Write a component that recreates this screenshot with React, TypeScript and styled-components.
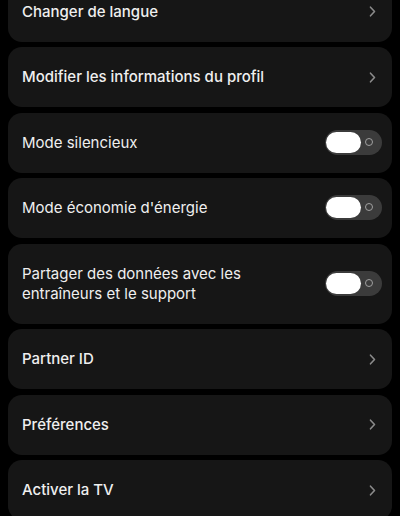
import styled, { createGlobalStyle } from "styled-components";

const GlobalStyle = createGlobalStyle`
  html, body {
    margin: 0;
    padding: 0;
    background: #000;
  }
  body {
    font-family: Inter, "Noto Sans", sans-serif;
    -webkit-font-smoothing: antialiased;
  }
`;

const Screen = styled.div`
  width: 400px;
  height: 516px;
  overflow: hidden;
  background: #000;
`;

// list is scrolled a bit, first card is cut by the top edge
const List = styled.div`
  display: flex;
  flex-direction: column;
  gap: 5.5px;
  padding: 0 8px;
  margin-top: -18.5px;
`;

const Card = styled.div`
  display: flex;
  align-items: center;
  justify-content: space-between;
  min-height: 60px;
  box-sizing: border-box;
  padding: 20px 16px 20px 14px;
  background: #161616;
  border-radius: 14px;
`;

const Label = styled.span<{ $strong?: boolean }>`
  color: #efefef;
  font-size: 15px;
  line-height: 20px;
  font-weight: ${(p) => (p.$strong ? 500 : 400)};
  max-width: 270px;
`;

const Track = styled.div`
  position: relative;
  width: 57px;
  height: 25px;
  border-radius: 13px;
  background: #3b3b3b;
  margin: -3px -6px -2px 0;
  flex-shrink: 0;
`;

const Knob = styled.div`
  position: absolute;
  left: 1px;
  top: 2px;
  width: 35px;
  height: 21px;
  border-radius: 11px;
  background: #fff;
`;

const Ring = styled.div`
  position: absolute;
  right: 9px;
  top: 8px;
  width: 8px;
  height: 8px;
  border-radius: 50%;
  border: 1.3px solid #a0a0a0;
  box-sizing: border-box;
`;

const Chevron = () => (
  <svg width="7" height="11" viewBox="0 0 7 11" fill="none">
    <path
      d="M1.5 1.2 L5.5 5.5 L1.5 9.8"
      stroke="#8a8a8a"
      strokeWidth="1.6"
      strokeLinecap="round"
      strokeLinejoin="round"
    />
  </svg>
);

const Toggle = () => (
  <Track>
    <Knob />
    <Ring />
  </Track>
);

type Row = { label: string; kind: "link" | "toggle" };

const rows: Row[] = [
  { label: "Changer de langue", kind: "link" },
  { label: "Modifier les informations du profil", kind: "link" },
  { label: "Mode silencieux", kind: "toggle" },
  { label: "Mode économie d'énergie", kind: "toggle" },
  { label: "Partager des données avec les entraîneurs et le support", kind: "toggle" },
  { label: "Partner ID", kind: "link" },
  { label: "Préférences", kind: "link" },
  { label: "Activer la TV", kind: "link" },
];

export default function App() {
  return (
    <>
      <GlobalStyle />
      <Screen>
        <List>
          {rows.map((r) => (
            <Card key={r.label}>
              <Label $strong={r.kind === "link"}>{r.label}</Label>
              {r.kind === "link" ? <Chevron /> : <Toggle />}
            </Card>
          ))}
        </List>
      </Screen>
    </>
  );
}
